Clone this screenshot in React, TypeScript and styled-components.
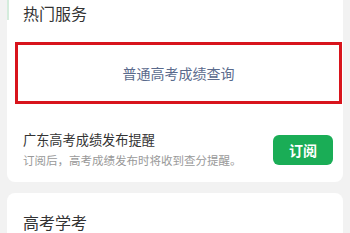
import styled, { createGlobalStyle } from "styled-components";

const GlobalStyle = createGlobalStyle`
  html, body {
    margin: 0;
    padding: 0;
    background: #f2f2f2;
    font-family: "Noto Sans CJK SC", "Noto Sans", sans-serif;
  }
`;

export default function App() {
  return (
    <>
      <GlobalStyle />
      <Page>
        <Card>
          <AccentBar />
          <CardTitle>热门服务</CardTitle>
          <HighlightBox>
            <ServiceLink>普通高考成绩查询</ServiceLink>
          </HighlightBox>
          <ReminderRow>
            <ReminderText>
              <ReminderTitle>广东高考成绩发布提醒</ReminderTitle>
              <ReminderDesc>订阅后，高考成绩发布时将收到查分提醒。</ReminderDesc>
            </ReminderText>
            <SubscribeButton>订阅</SubscribeButton>
          </ReminderRow>
        </Card>
        <Card $top={11}>
          <CardTitle $pad={16}>高考学考</CardTitle>
        </Card>
      </Page>
    </>
  );
}

const Page = styled.div`
  width: 350px;
  height: 233px;
  overflow: hidden;
  background: #f2f2f2;
`;

const Card = styled.div<{ $top?: number }>`
  position: relative;
  margin: ${(p) => p.$top ?? 0}px 7px 0 7px;
  padding: 0 10px 0 16px;
  background: #ffffff;
  border-radius: 0 0 8px 8px;
  ${(p) => (p.$top ? "border-radius: 8px 8px 0 0; min-height: 60px;" : "")}
`;

const AccentBar = styled.div`
  position: absolute;
  left: 0;
  top: 0;
  width: 2px;
  height: 20px;
  background: #d4ecdc;
`;

const CardTitle = styled.div<{ $pad?: number }>`
  padding-top: ${(p) => p.$pad ?? 0}px;
  font-size: 16px;
  line-height: 26px;
  color: #333333;
`;

const HighlightBox = styled.div`
  margin: 16px -9px 0 -8px;
  height: 56px;
  border: 3px solid #d8141c;
  display: flex;
  align-items: center;
  justify-content: center;
`;

const ServiceLink = styled.span`
  font-size: 14px;
  color: #5a6a8c;
`;

const ReminderRow = styled.div`
  display: flex;
  align-items: center;
  justify-content: space-between;
  padding: 26px 0 13px 0;
`;

const ReminderText = styled.div`
  display: flex;
  flex-direction: column;
  gap: 1px;
`;

const ReminderTitle = styled.div`
  font-size: 13.2px;
  line-height: 20px;
  color: #333333;
`;

const ReminderDesc = styled.div`
  font-size: 11.5px;
  line-height: 18px;
  color: #999999;
`;

const SubscribeButton = styled.button`
  width: 60px;
  height: 30px;
  border: none;
  border-radius: 6px;
  background: #1aad56;
  color: #ffffff;
  font-family: inherit;
  font-size: 14px;
  font-weight: 700;
  padding: 0;
`;
